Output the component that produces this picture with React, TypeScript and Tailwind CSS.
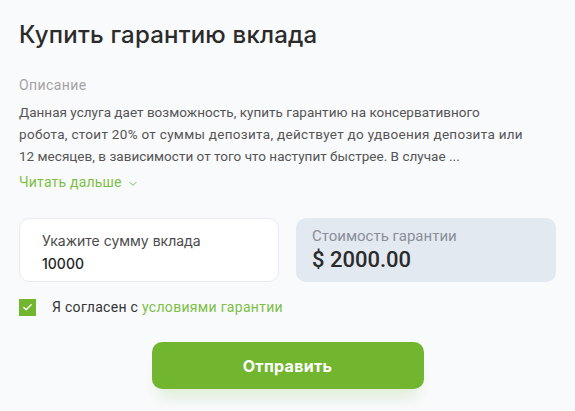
import { Check, ChevronDown } from 'lucide-react';

export default function App() {
  return (
    <div className="w-[575px] h-[411px] overflow-hidden bg-[#f9fafc] px-[19px] pt-[19px] font-['Inter',sans-serif]">
      <h1 className="text-[24px] leading-[32px] font-medium text-[#2b2b2b] tracking-[0.2px]">
        Купить гарантию вклада
      </h1>

      <div className="mt-[23px] font-['Roboto',sans-serif] text-[14px] leading-[22px] tracking-[0.4px] text-[#a3a3a3]">Описание</div>
      <p className="mt-[5px] font-['Roboto',sans-serif] text-[13.5px] leading-[22px] tracking-[0.02px] text-[#555555] whitespace-nowrap">
        Данная услуга дает возможность, купить гарантию на консервативного
        <br />
        <span className="tracking-[0.3px]">робота, стоит 20% от суммы депозита, действует до удвоения депозита или</span>
        <br />
        12 месяцев, в зависимости от того что наступит быстрее. В случае ...
      </p>
      <button className="mt-[5px] flex items-center gap-[5px] font-['Roboto',sans-serif] text-[14px] leading-[20px] tracking-[0.2px] text-[#7dbf45]">
        Читать дальше
        <ChevronDown className="w-[12px] h-[12px] mt-[3px]" strokeWidth={2} />
      </button>

      <div className="mt-[26px] grid grid-cols-2 gap-[17px]">
        <div className="h-[64px] rounded-[10px] bg-white border border-[#e6ebf2] pl-[22px] pt-[12px]">
          <div className="text-[14px] leading-[20px] text-[#4a4a4a]">Укажите сумму вклада</div>
          <div className="mt-[3px] text-[14px] leading-[20px] text-[#1f1f1f] font-medium">10000</div>
        </div>
        <div className="h-[64px] rounded-[10px] bg-[#e3e9f1] pl-[16px] pt-[8px] font-['Roboto',sans-serif]">
          <div className="text-[15px] leading-[20px] text-[#8a8f97]">Стоимость гарантии</div>
          <div className="mt-[1px] text-[22px] leading-[26px] font-medium text-[#2b2b2b]">$ 2000.00</div>
        </div>
      </div>

      <label className="mt-[15px] flex items-center gap-[16px] font-['Roboto',sans-serif]">
        <span className="w-[17px] h-[17px] bg-[#72b52f] flex items-center justify-center">
          <Check className="w-[11px] h-[11px] text-white" strokeWidth={3} />
        </span>
        <span className="text-[14px] leading-[20px] tracking-[0.3px] text-[#333333]">
          Я согласен с <span className="text-[#7dbf45]">условиями гарантии</span>
        </span>
      </label>

      <div className="mt-[25px] flex justify-center">
        <button className="w-[272px] h-[47px] rounded-[10px] bg-[#72b52f] text-white text-[16px] font-bold tracking-[0.3px] shadow-[0_16px_14px_-6px_rgba(114,181,47,0.16)]">
          Отправить
        </button>
      </div>
    </div>
  );
}
